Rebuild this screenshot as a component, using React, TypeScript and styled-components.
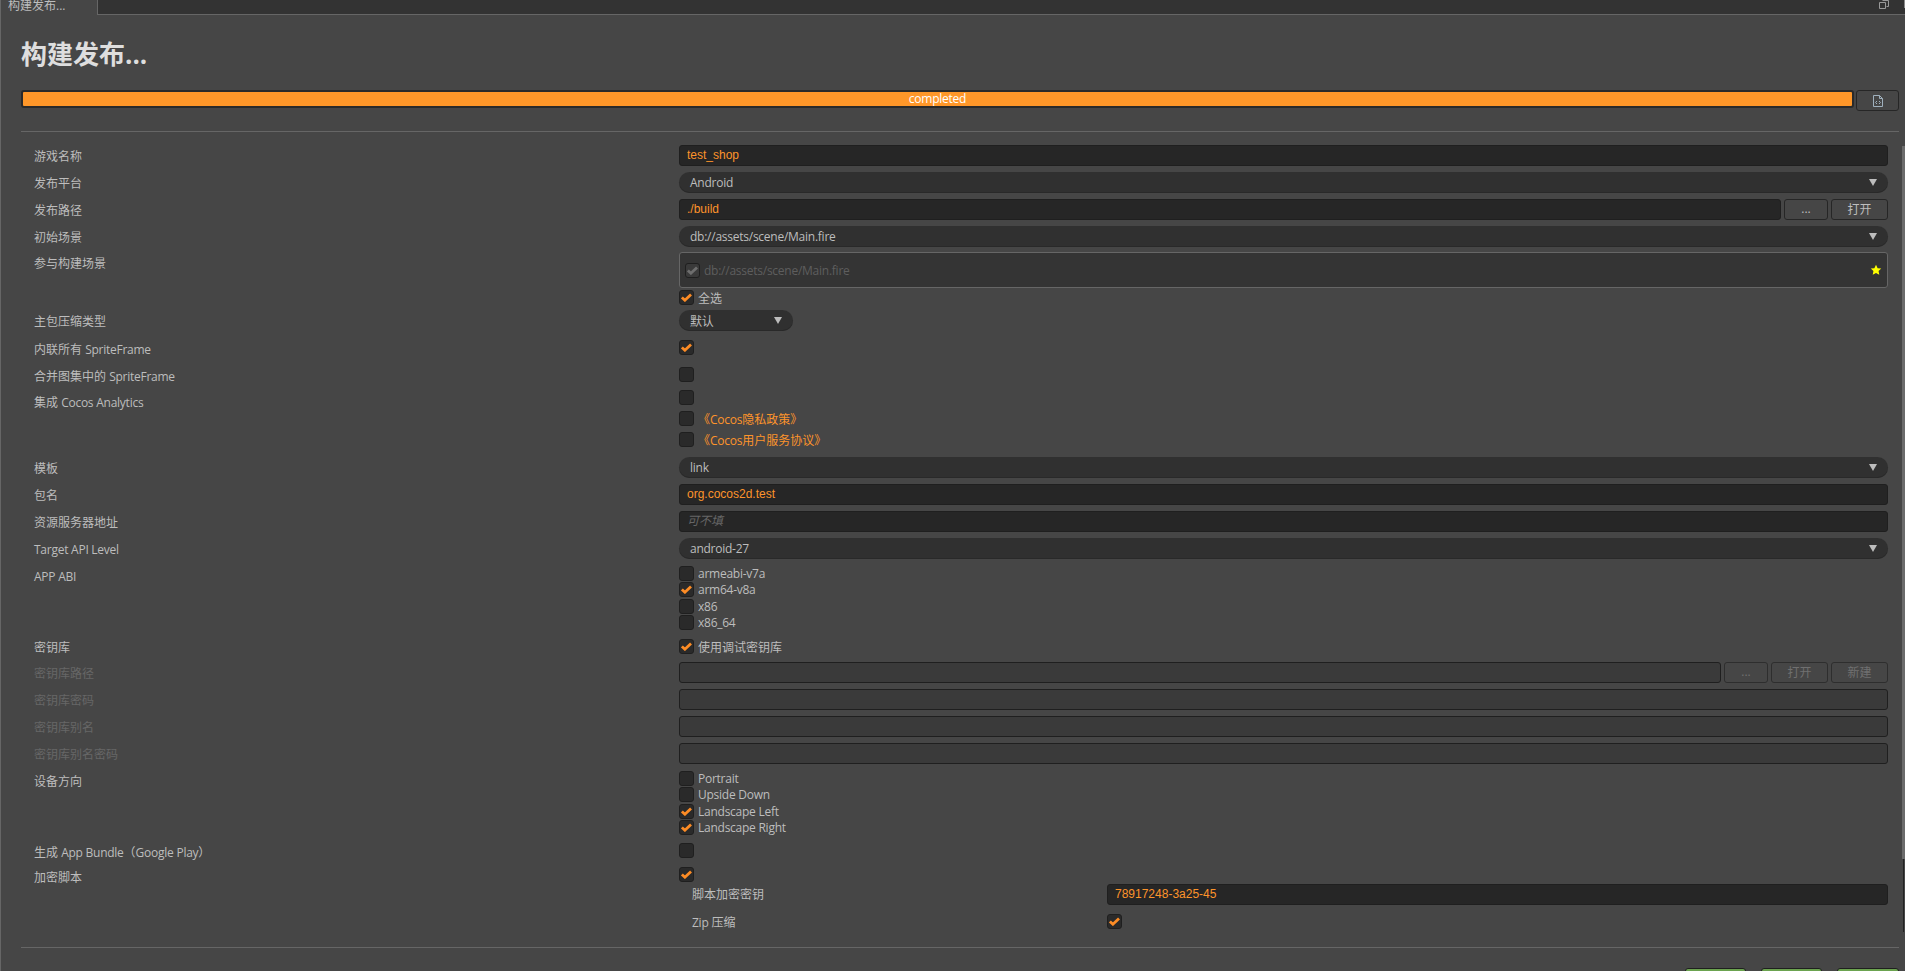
import React from 'react';
import styled, { createGlobalStyle } from 'styled-components';

const Global = createGlobalStyle`
  html, body { margin: 0; padding: 0; height: 100%; overflow: hidden; background: #464646; }
  * { box-sizing: border-box; }
`;

const UI_FONT = `"Open Sans", "Noto Sans CJK SC", sans-serif`;
const Page = styled.div`
  position: relative;
  width: 1905px;
  height: 971px;
  overflow: hidden;
  background: #464646;
  border-left: 1px solid #666;
  font-family: ${UI_FONT};
  font-size: 12px;
  color: #bdbdbd;
`;
const Latin = styled.span`
  letter-spacing: -0.25px;
`;
const TabBar = styled.div`
  display: flex;
  justify-content: space-between;
  height: 15px;
  margin-left: -1px;
  background: #333;
  border-bottom: 1px solid #666;
`;
const Tab = styled.div`
  width: 98px;
  height: 15px;
  background: #464646;
  border-right: 1px solid #666;
  border-left: 1px solid #666;
  padding-left: 7px;
  font-size: 12px;
  line-height: 12px;
  color: #bdbdbd;
  overflow: hidden;
`;
const TabTools = styled.div`
  display: flex;
  align-items: flex-start;
  gap: 15px;
`;
const TabIcon = styled.svg`
  width: 10px;
  height: 10px;
`;
const TabDots = styled.i`
  width: 1px;
  height: 8px;
  background: #8a8a8a;
`;
const Content = styled.div`
  display: flex;
  flex-direction: column;
  padding: 0 6px 0 20px;
`;
const Title = styled.h1`
  margin: 26px 0 0;
  height: 27px;
  font-size: 26px;
  line-height: 27px;
  font-weight: 700;
  color: #dedede;
`;
const ProgressRow = styled.div`
  display: flex;
  gap: 2px;
  margin-top: 22px;
  height: 21px;
`;
const Progress = styled.div`
  flex: 1;
  height: 18px;
  background: #ff9729;
  border: 2px solid #2a2a2a;
  border-radius: 3px;
  color: #fff;
  font-size: 12px;
  line-height: 13px;
  text-align: center;
`;
const IconButton = styled.button`
  width: 43px;
  height: 21px;
  padding: 0;
  display: flex;
  align-items: center;
  justify-content: center;
  background: #464646;
  border: 1px solid #262626;
  border-radius: 3px;
`;
const Divider = styled.div`
  height: 1px;
  background: #666;
`;
const TopDivider = styled(Divider)`
  margin: 20px 0 13px;
`;
const Form = styled.div`
  display: flex;
  flex-direction: column;
  height: 802px;
  padding-right: 11px;
`;
const Row = styled.div<{ $h?: number }>`
  display: grid;
  grid-template-columns: 645px 1fr;
  height: ${p => p.$h ?? 27}px;
  padding-left: 13px;
`;
const Label = styled.div<{ $off?: boolean; $pt?: number }>`
  font-size: 12px;
  line-height: 21px;
  padding-top: ${p => p.$pt ?? 1}px;
  color: ${p => (p.$off ? '#666' : '#bdbdbd')};
  white-space: nowrap;
`;
const Control = styled.div`
  min-width: 0;
`;
const InputLine = styled.div`
  display: flex;
  gap: 3px;
`;
const Input = styled.div<{ $off?: boolean }>`
  flex: 1;
  height: 21px;
  padding: 0 7px;
  background: ${p => (p.$off ? '#3a3a3a' : '#262626')};
  border: 1px solid #1f1f1f;
  border-radius: 3px;
  font-family: "Liberation Sans", "Noto Sans CJK SC", sans-serif;
  font-size: 12px;
  line-height: 19px;
  color: #fd942b;
`;
const Placeholder = styled.span`
  color: #666;
  font-style: italic;
`;
const Select = styled.div<{ $w?: number }>`
  display: flex;
  align-items: center;
  justify-content: space-between;
  width: ${p => (p.$w ? `${p.$w}px` : '100%')};
  height: 21px;
  padding: 0 11px;
  background: #303030;
  box-shadow: inset 0 -1px #292929;
  border-radius: 11px;
  font-size: 12px;
  color: #bdbdbd;
`;
const Arrow = styled.i`
  width: 0;
  height: 0;
  border-left: 4px solid transparent;
  border-right: 4px solid transparent;
  border-top: 7px solid #bdbdbd;
`;
const Btn = styled.button<{ $w: number; $off?: boolean; $dots?: boolean }>`
  width: ${p => p.$w}px;
  height: 21px;
  padding: 0 0 ${p => (p.$dots ? 6 : 0)}px;
  background: #464646;
  border: 1px solid ${p => (p.$off ? '#2e2e2e' : '#262626')};
  border-radius: 3px;
  font-family: ${UI_FONT};
  font-size: 12px;
  line-height: 17px;
  color: ${p => (p.$off ? '#707070' : '#bdbdbd')};
`;
const Box = styled.span<{ $off?: boolean }>`
  display: flex;
  align-items: center;
  justify-content: center;
  flex: none;
  width: 15px;
  height: 15px;
  background: ${p => (p.$off ? '#3a3a3a' : '#2a2a2a')};
  border: 1px solid #1f1f1f;
  border-radius: 3px;
`;
const CheckLine = styled.div<{ $h?: number; $mt?: number }>`
  display: flex;
  align-items: center;
  gap: 4px;
  height: ${p => p.$h ?? 16.5}px;
  margin-top: ${p => p.$mt ?? 0}px;
  white-space: nowrap;
`;
const CheckText = styled.span<{ $link?: boolean }>`
  color: ${p => (p.$link ? '#fd942b' : '#bdbdbd')};
`;
const SceneBox = styled.div`
  display: flex;
  align-items: center;
  justify-content: space-between;
  height: 36px;
  padding: 0 5px;
  background: #343434;
  border: 1px solid #666;
  border-radius: 3px;
`;
const SceneLeft = styled.div`
  display: flex;
  align-items: center;
  gap: 4px;
  color: #5e5e5e;
`;
const Star = styled.svg`
  width: 12px;
  height: 12px;
`;
const SubRow = styled.div<{ $h: number }>`
  display: grid;
  grid-template-columns: 415px 1fr;
  height: ${p => p.$h}px;
  padding-left: 671px;
`;
const SubLabel = styled.div`
  line-height: 21px;
`;
const Actions = styled.div`
  display: flex;
  justify-content: flex-end;
  gap: 15px;
  margin-top: 20px;
`;
const Green = styled.div<{ $w: number }>`
  width: ${p => p.$w}px;
  height: 24px;
  background: #6ba34f;
  border: 1px solid #1f1f1f;
  border-radius: 3px;
`;
const Scrollbar = styled.div`
  position: absolute;
  right: 0;
  top: 146px;
  width: 3px;
  height: 713px;
  background: #6b6b6b;
`;
const ScrollRest = styled.div`
  position: absolute;
  right: 1px;
  top: 859px;
  width: 1px;
  height: 73px;
  background: #222;
`;

const Tick = ({ c }: { c: string }) => (
  <svg width="11" height="9" viewBox="0 0 11 9">
    <path d="M.9 4.4 L3.9 7.2 L10 1.4" fill="none" stroke={c} strokeWidth="2.8" />
  </svg>
);
const CB = ({ on, off }: { on?: boolean; off?: boolean }) => (
  <Box $off={off}>{on && <Tick c={off ? '#6e6e6e' : '#fd8c25'} />}</Box>
);
const Sel = ({ v, w }: { v: string; w?: number }) => (
  <Select $w={w}><Latin>{v}</Latin><Arrow /></Select>
);

export default function App() {
  return (
    <Page>
      <Global />
      <TabBar>
        <Tab>构建发布...</Tab>
        <TabTools>
          <TabIcon viewBox="0 0 10 10">
            <path d="M3.5 .5h6v6h-2M.5 2.5h6v6h-6z" fill="none" stroke="#9a9a9a" />
          </TabIcon>
          <TabDots />
        </TabTools>
      </TabBar>
      <Content>
        <Title>构建发布...</Title>
        <ProgressRow>
          <Progress><Latin>completed</Latin></Progress>
          <IconButton aria-label="log">
            <svg width="10" height="12" viewBox="0 0 10 12">
              <path d="M.5.5h6l3 3v8h-9zM6.5.5v3h3" fill="none" stroke="#9fb0bd" />
              <path d="M4 6 2.5 7.5 4 9M6 6l1.5 1.5L6 9" fill="none" stroke="#9fb0bd" />
            </svg>
          </IconButton>
        </ProgressRow>
        <TopDivider />
        <Form>
          <Row><Label>游戏名称</Label><Control><Input>test_shop</Input></Control></Row>
          <Row><Label>发布平台</Label><Control><Sel v="Android" /></Control></Row>
          <Row>
            <Label>发布路径</Label>
            <Control><InputLine><Input>./build</Input><Btn $dots $w={44}>...</Btn><Btn $w={57}>打开</Btn></InputLine></Control>
          </Row>
          <Row $h={26}><Label>初始场景</Label><Control><Sel v="db://assets/scene/Main.fire" /></Control></Row>
          <Row $h={58}>
            <Label>参与构建场景</Label>
            <Control>
              <SceneBox>
                <SceneLeft><CB on off /><Latin>db://assets/scene/Main.fire</Latin></SceneLeft>
                <Star viewBox="0 0 24 24"><path d="M12 1.5l3.2 6.8 7.3.9-5.4 5 1.5 7.3L12 17.9l-6.6 3.6 1.5-7.3-5.4-5 7.3-.9z" fill="#ffff00" /></Star>
              </SceneBox>
              <CheckLine $h={15} $mt={2}><CB on /><CheckText>全选</CheckText></CheckLine>
            </Control>
          </Row>
          <Row $h={28}><Label>主包压缩类型</Label><Control><Sel v="默认" w={114} /></Control></Row>
          <Row><Label>内联所有 <Latin>SpriteFrame</Latin></Label><Control><CheckLine $h={15} $mt={2}><CB on /></CheckLine></Control></Row>
          <Row $h={25}><Label>合并图集中的 <Latin>SpriteFrame</Latin></Label><Control><CheckLine $h={15} $mt={2}><CB /></CheckLine></Control></Row>
          <Row $h={67}>
            <Label $pt={2}>集成 <Latin>Cocos Analytics</Latin></Label>
            <Control>
              <CheckLine $h={15}><CB /></CheckLine>
              <CheckLine $h={15} $mt={6}><CB /><CheckText $link>《<Latin>Cocos</Latin>隐私政策》</CheckText></CheckLine>
              <CheckLine $h={15} $mt={6}><CB /><CheckText $link>《<Latin>Cocos</Latin>用户服务协议》</CheckText></CheckLine>
            </Control>
          </Row>
          <Row><Label>模板</Label><Control><Sel v="link" /></Control></Row>
          <Row><Label>包名</Label><Control><Input>org.cocos2d.test</Input></Control></Row>
          <Row><Label>资源服务器地址</Label><Control><Input><Placeholder>可不填</Placeholder></Input></Control></Row>
          <Row><Label><Latin>Target API Level</Latin></Label><Control><Sel v="android-27" /></Control></Row>
          <Row $h={71}>
            <Label><Latin>APP ABI</Latin></Label>
            <Control>
              <CheckLine><CB /><CheckText><Latin>armeabi-v7a</Latin></CheckText></CheckLine>
              <CheckLine><CB on /><CheckText><Latin>arm64-v8a</Latin></CheckText></CheckLine>
              <CheckLine><CB /><CheckText><Latin>x86</Latin></CheckText></CheckLine>
              <CheckLine><CB /><CheckText><Latin>x86_64</Latin></CheckText></CheckLine>
            </Control>
          </Row>
          <Row $h={26}><Label>密钥库</Label><Control><CheckLine $h={21}><CB on /><CheckText>使用调试密钥库</CheckText></CheckLine></Control></Row>
          <Row>
            <Label $off>密钥库路径</Label>
            <Control><InputLine><Input $off /><Btn $off $dots $w={44}>...</Btn><Btn $off $w={57}>打开</Btn><Btn $off $w={57}>新建</Btn></InputLine></Control>
          </Row>
          <Row><Label $off>密钥库密码</Label><Control><Input $off /></Control></Row>
          <Row><Label $off>密钥库别名</Label><Control><Input $off /></Control></Row>
          <Row><Label $off>密钥库别名密码</Label><Control><Input $off /></Control></Row>
          <Row $h={71}>
            <Label>设备方向</Label>
            <Control>
              <CheckLine><CB /><CheckText><Latin>Portrait</Latin></CheckText></CheckLine>
              <CheckLine><CB /><CheckText><Latin>Upside Down</Latin></CheckText></CheckLine>
              <CheckLine><CB on /><CheckText><Latin>Landscape Left</Latin></CheckText></CheckLine>
              <CheckLine><CB on /><CheckText><Latin>Landscape Right</Latin></CheckText></CheckLine>
            </Control>
          </Row>
          <Row $h={25}><Label>生成 <Latin>App Bundle</Latin>（<Latin>Google Play</Latin>）</Label><Control><CheckLine $h={19}><CB /></CheckLine></Control></Row>
          <Row $h={18}><Label>加密脚本</Label><Control><CheckLine $h={15} $mt={1}><CB on /></CheckLine></Control></Row>
          <SubRow $h={28}><SubLabel>脚本加密密钥</SubLabel><Input>78917248-3a25-45</Input></SubRow>
          <SubRow $h={35}><SubLabel><Latin>Zip</Latin> 压缩</SubLabel><Control><CheckLine $h={15} $mt={2}><CB on /></CheckLine></Control></SubRow>
        </Form>
        <Divider />
        <Actions>
          <Green $w={61} />
          <Green $w={61} />
          <Green $w={62} />
        </Actions>
      </Content>
      <Scrollbar />
      <ScrollRest />
    </Page>
  );
}
